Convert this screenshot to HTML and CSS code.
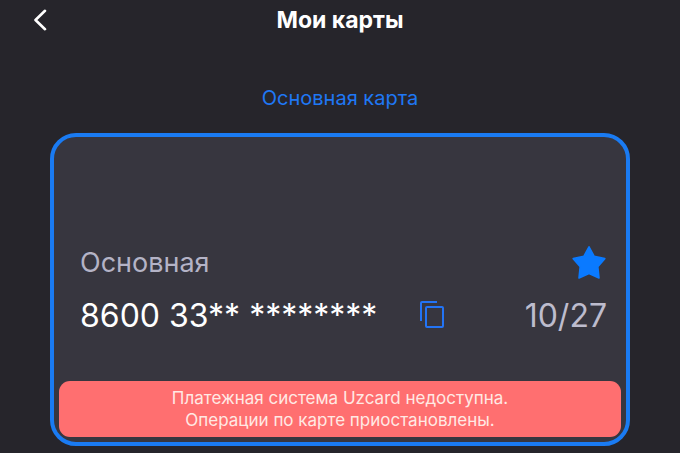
FILE: index.html
```html
<!DOCTYPE html>
<html lang="ru">
<head>
    <meta charset="UTF-8">
    <meta name="viewport" content="width=device-width, initial-scale=1.0">
    <title>Мои карты</title>
    <link rel="stylesheet" href="styles.css">
</head>
<body>

    <header class="topbar">
        <button class="icon-button back" type="button" aria-label="Назад">
            <svg width="16" height="22" viewBox="0 0 16 22">
                <path d="M13 1.8 L3.5 11 L13 20.2" fill="none" stroke="currentColor" stroke-width="2.6" stroke-linecap="round" stroke-linejoin="round"/>
            </svg>
        </button>
        <h1>Мои карты</h1>
    </header>

    <main>
        <h2>Основная карта</h2>

        <section class="card">
            <div class="card-info">
                <div class="card-row">
                    <span class="card-name">Основная</span>
                    <svg class="star" width="36" height="34" viewBox="0 0 36 34">
                        <path d="M18 1.8 L23.2 11.4 L33.8 13.6 L26.8 21.6 L28 33 L18 28.4 L8 33 L9.2 21.6 L2.2 13.6 L12.8 11.4 Z" fill="currentColor" stroke="currentColor" stroke-width="1.6" stroke-linejoin="round"/>
                    </svg>
                </div>
                <div class="card-row">
                    <span class="card-number">8600 33** ********</span>
                    <button class="icon-button copy" type="button" aria-label="Скопировать номер">
                        <svg width="24" height="28" viewBox="0 0 24 28">
                            <path d="M17 1 H2 Q1 1 1 2 V20" fill="none" stroke="currentColor" stroke-width="2"/>
                            <rect x="6" y="6" width="17" height="20" rx="1" fill="none" stroke="currentColor" stroke-width="2"/>
                        </svg>
                    </button>
                    <span class="card-date">10/27</span>
                </div>
            </div>
            <p class="alert">Платежная система Uzcard недоступна.<br>Операции по карте приостановлены.</p>
        </section>
    </main>

</body>
</html>
```
FILE: styles.css
```css
/* General body styling */
* {
    box-sizing: border-box;
}

body {
    margin: 0;
    background-color: #26252b;
    color: white;
    font-family: Inter, "Liberation Sans", sans-serif;
}

.icon-button {
    display: flex;
    padding: 0;
    border: none;
    background: none;
    color: inherit;
    cursor: pointer;
}

/* Header styling */
.topbar {
    display: grid;
    grid-template-columns: 1fr auto 1fr;
    align-items: center;
    height: 40px;
    padding: 0 32px;
}

h1 {
    margin: 0;
    font-size: 23px;
    line-height: 40px;
    font-weight: 700;
}

main {
    padding: 44px 50px 7px;
}

h2 {
    margin: 0 0 21px;
    color: #1f78f5;
    font-size: 20px;
    line-height: 28px;
    font-weight: 400;
    text-align: center;
}

/* Bank card */
.card {
    padding: 102px 5px 5px;
    border: 4px solid #1a7bf2;
    border-radius: 26px;
    background-color: #37363f;
}

.card-info {
    display: flex;
    flex-direction: column;
    gap: 7px;
    padding: 0 14px 0 21px;
}

.card-row {
    display: flex;
    align-items: center;
    height: 46px;
}

.card-name {
    color: #b4b3c6;
    font-size: 27px;
}

.star {
    margin-left: auto;
    color: #0a7aff;
}

.card-number {
    font-size: 32px;
}

.copy {
    margin-left: 43px;
    color: #2374f5;
}

.card-date {
    margin-left: auto;
    color: #bdbccd;
    font-size: 32px;
}

/* Warning at the bottom of the card */
.alert {
    margin: 43px 0 0;
    padding: 6px 16px;
    border-radius: 11px;
    background-color: #ff6f70;
    color: #ffe9e4;
    font-size: 17px;
    line-height: 22px;
    text-align: center;
}
```
